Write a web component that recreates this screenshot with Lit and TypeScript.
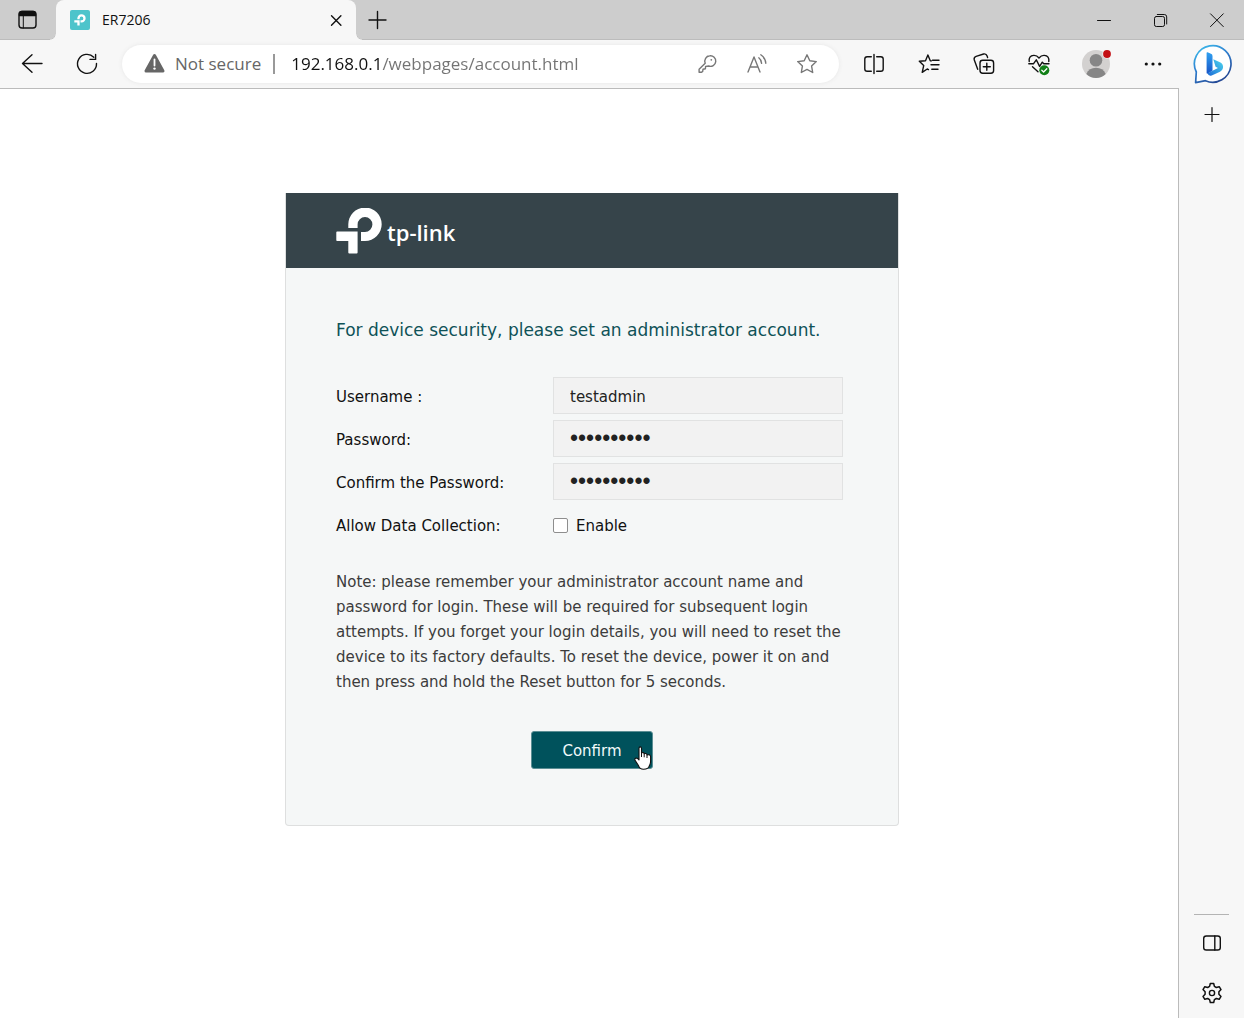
import { LitElement, html, css, svg } from "lit";
import { customElement, state } from "lit/decorators.js";

const tpMark = svg`
  <path d="M12.3 20 V16.7 A16.7 16.7 0 1 1 29 33 H25 V23.9 H29 A7.4 7.4 0 1 0 21.6 16.5 V20 Z"/>
  <path d="M0.8 23.6 H21.6 V44.4 Q21.6 45.4 20.6 45.4 H13.3 Q12.3 45.4 12.3 44.4 V33 H1 Q0.3 33 0.3 32 V24.2 Z"/>`;

const icon = (size: number, body: unknown, cls = "") => html`
  <svg class="icon ${cls}" width=${size} height=${size} viewBox="0 0 ${size} ${size}" aria-hidden="true">${body}</svg>`;

const glyphs = {
  tabs: svg`<rect x="3" y="3.5" width="17" height="16.5" rx="3"/><path d="M3.5 7.5 V6 Q3.5 3.5 6 3.5 H17 Q19.5 3.5 19.5 6 V7.5 Z" fill="currentColor"/><path d="M7.3 8 V20" stroke-width="1"/>`,
  close: svg`<path d="M7.5 7.8 L16.9 17.2 M16.9 7.8 L7.5 17.2"/>`,
  plus: svg`<path d="M12.5 3.5 V20.5 M4 12 H21"/>`,
  smallPlus: svg`<path d="M12 5.5 V19.5 M5 12.5 H19" stroke-width="1.2"/>`,
  minimise: svg`<path d="M5.5 12.5 H18.5"/>`,
  restore: svg`<rect x="5.5" y="8.5" width="10" height="10" rx="1.8"/><path d="M8.3 6.5 H15.3 Q17.7 6.5 17.7 8.9 V16"/>`,
  windowClose: svg`<path d="M5.5 5.8 L18.3 18.6 M18.3 5.8 L5.5 18.6"/>`,
  back: svg`<path d="M22 11.5 H2.5 M12 2.7 L2.5 11.5 L12 20.3"/>`,
  reload: svg`<path d="M18.8 5.2 A9.5 9.5 0 1 0 21.5 11.5 M20.6 2.4 V7.4 H15"/>`,
  warning: svg`<path d="M12.5 3.5 L21 19 H4 Z" fill="currentColor" stroke-width="3"/><path d="M12.5 7.5 V13.5" stroke="#fff" stroke-width="1.8"/><circle cx="12.5" cy="16.6" r="1.2" fill="#fff" stroke="none"/>`,
  key: svg`<path d="M14.7 3.8 A5.3 5.3 0 1 1 13.6 14 L10.6 14.4 L10.4 16.8 L8 17.2 L7.7 19.4 L6.6 20.3 H4.1 V17.3 L10.2 11.2 A5.4 5.4 0 0 1 14.7 3.8 Z"/><circle cx="16.3" cy="7.8" r="0.9" fill="currentColor" stroke="none"/>`,
  readAloud: svg`<path d="M3 20 L9 5 L15 20 M5 15 H13 M13.8 5.8 Q16.2 7.6 16.6 11.3 M15.8 2.8 Q20.4 6 20.8 11.3"/>`,
  star: svg`<path d="M12 2.8 L14.8 8.7 L21.3 9.6 L16.6 14.1 L17.7 20.5 L12 17.4 L6.3 20.5 L7.4 14.1 L2.7 9.6 L9.2 8.7 Z"/>`,
  split: svg`<path d="M12 2.5 V21.5 M9.3 4.7 H5.2 Q2.8 4.7 2.8 7 V17 Q2.8 19.3 5.2 19.3 H9.3 M14.7 4.7 H18.8 Q21.2 4.7 21.2 7 V17 Q21.2 19.3 18.8 19.3 H14.7"/>`,
  favourites: svg`<path d="M14.3 8.9 L13.3 8.7 L10.9 3 L8.5 8.7 L2.3 9.3 L6.7 13.6 L5.2 20.3 L10.2 17 L11.5 17.6 M15.5 8.3 H22 M14 12.7 H22 M14.8 17.2 H21"/>`,
  collections: svg`<rect x="8" y="8.3" width="13.6" height="13" rx="2.7"/><path d="M14.8 11.3 V18.3 M11.3 14.8 H18.3 M5.7 17.3 L2.3 8 Q1.5 5.3 4.1 4.4 L11.6 2 Q14.3 1.5 15.1 4 L15.6 5.5"/>`,
  heart: svg`<path d="M2.2 9.5 Q1.5 3.8 6.7 3.4 Q9.8 3.2 12 6 Q14.3 3.2 17.3 3.4 Q22.5 3.8 21.8 9.5 M1.8 11.8 H6.4 L9.3 7.8 L12.6 14.4 L15.3 10.2 L16.8 11.8 H22 M5.5 14.8 L11 19.8"/><circle cx="17.3" cy="18.2" r="5" fill="#128018" stroke="none"/><path d="M14.8 18.3 L16.6 20 L19.8 16.7" stroke="#fff" stroke-width="1.3"/>`,
  avatar: svg`<g stroke="none"><circle cx="16" cy="16" r="14" fill="#d3d1d0"/><circle cx="16" cy="12.2" r="6.3" fill="#868686"/><path d="M6.3 26 Q9 19.8 16 19.8 Q23 19.8 25.7 26 A14 14 0 0 1 6.3 26 Z" fill="#868686"/><circle cx="27" cy="6" r="4.6" fill="#f7f7f7"/><circle cx="27" cy="6" r="3.9" fill="#c30f14"/></g>`,
  more: svg`<g fill="currentColor" stroke="none"><circle cx="5.3" cy="12" r="1.6"/><circle cx="12" cy="12" r="1.6"/><circle cx="18.7" cy="12" r="1.6"/></g>`,
  panel: svg`<rect x="3.7" y="5" width="16.6" height="14" rx="2.6"/><path d="M14.8 5 V19"/>`,
  gear: svg`<path d="M10.3 2.5 H13.7 L14.4 5.4 L16.3 6.5 L19.2 5.7 L21 8.6 L18.9 10.8 V13.2 L21 15.4 L19.2 18.3 L16.3 17.5 L14.4 18.6 L13.7 21.5 H10.3 L9.6 18.6 L7.7 17.5 L4.8 18.3 L3 15.4 L5.1 13.2 V10.8 L3 8.6 L4.8 5.7 L7.7 6.5 L9.6 5.4 Z" stroke-width="1.5"/><circle cx="12" cy="12" r="2.6"/>`,
  bing: svg`
    <defs>
      <linearGradient id="ring" x1="0" y1="0" x2="0.6" y2="1"><stop offset="0" stop-color="#3ec3ee"/><stop offset="0.5" stop-color="#2f80d0"/><stop offset="1" stop-color="#254a96"/></linearGradient>
      <linearGradient id="stem" x1="0" y1="0" x2="0" y2="1"><stop offset="0" stop-color="#2f9ff0"/><stop offset="1" stop-color="#1857c8"/></linearGradient>
      <linearGradient id="bowl" x1="0" y1="1" x2="1" y2="0"><stop offset="0" stop-color="#1c6bd6"/><stop offset="1" stop-color="#4fd8ee"/></linearGradient>
    </defs>
    <g transform="translate(1 1.5)">
      <path d="M2.6 38.2 L3.3 27.5 A18.3 18.3 0 1 1 12.5 36.2 Z" fill="#fff" stroke="url(#ring)" stroke-width="1.7"/>
      <path d="M14.3 8.5 L17.7 9.8 Q18.8 10.2 18.8 11.5 V26 L14.3 28.5 Z" fill="url(#stem)" stroke="url(#stem)"/>
      <path d="M20.3 14.8 L27.5 18 Q30.5 19.6 30 23.5 Q29.4 26.3 27 27.3 L18.7 31 Q15.5 32 14.5 28.8 L25 23.6 L22.6 22.2 Z" fill="url(#bowl)" stroke="none"/>
    </g>`,
};

@customElement("app-root")
export class AppRoot extends LitElement {
  static styles = css`
    :host {
      display: flex;
      flex-direction: column;
      min-height: 100vh;
      background: #f7f7f7;
      color: #111;
      font-family: "Open Sans", "Noto Sans", sans-serif;
    }
    * { box-sizing: border-box; }
    button {
      border: 0;
      padding: 0;
      background: none;
      color: inherit;
      font: inherit;
      display: flex;
      align-items: center;
      justify-content: center;
      flex: none;
    }
    .icon {
      display: block;
      flex: none;
      fill: none;
      stroke: currentColor;
      stroke-width: 1.4;
      stroke-linecap: round;
      stroke-linejoin: round;
    }
    .thin { stroke-width: 1; }
    .titlebar {
      display: flex;
      height: 40px;
      background: #cdcdcd;
      box-shadow: inset 0 -1px #bcbcbc;
    }
    .tabmenu { width: 56px; height: 40px; }
    .tab {
      position: relative;
      display: flex;
      align-items: center;
      gap: 12px;
      width: 300px;
      padding: 0 8px 0 14px;
      background: #f7f7f7;
      border-radius: 8px 8px 0 0;
    }
    .tab::before, .tab::after {
      content: "";
      position: absolute;
      bottom: 0;
      width: 6px;
      height: 6px;
    }
    .tab::before {
      left: -6px;
      background: radial-gradient(circle at 0 0, transparent 5px, #bcbcbc 5px, #f7f7f7 6px);
    }
    .tab::after {
      right: -6px;
      background: radial-gradient(circle at 100% 0, transparent 5px, #bcbcbc 5px, #f7f7f7 6px);
    }
    .tabname { flex: 1; padding-bottom: 2px; font-size: 14px; }
    .favicon { display: block; border-radius: 2px; background: #4dc4cb; fill: #fff; }
    .newtab { width: 42px; }
    .winbuttons { display: flex; margin-left: auto; }
    .winbutton { width: 57px; height: 40px; }
    .winbutton:last-child { width: 55px; }
    .toolbar {
      display: flex;
      align-items: center;
      gap: 15px;
      height: 48px;
      padding: 0 6px 0 12px;
    }
    .tool { width: 40px; height: 40px; }
    .profile { width: 44px; height: 40px; }
    .bing { width: 50px; height: 40px; }
    .address {
      display: flex;
      align-items: center;
      flex: 1;
      min-width: 0;
      height: 38px;
      padding: 0 7px 0 20px;
      border-radius: 19px;
      background: #fff;
      box-shadow: 0 0 4px #e6e6e6;
      color: #666;
      font-size: 17px;
    }
    .notsecure { display: flex; align-items: center; gap: 9px; }
    .notsecure span { padding-bottom: 2px; }
    .divider { width: 2px; height: 20px; margin: 0 16px 0 12px; background: #999; }
    .url {
      flex: 1;
      min-width: 0;
      border: 0;
      padding: 0 0 2px;
      outline: 0;
      font: inherit;
      color: transparent;
      background: linear-gradient(to right, #111 90px, #737373 90px) text;
      -webkit-background-clip: text;
      background-clip: text;
    }
    .inline { width: 50px; height: 38px; color: #777; }
    .main { display: flex; flex: 1; }
    .page {
      flex: 1;
      min-width: 0;
      padding: 104px 0 40px 6px;
      background: #fff;
      border-top: 1px solid #bbb;
      border-right: 1px solid #bbb;
      font-family: "DejaVu Sans", sans-serif;
      font-size: 15px;
    }
    .sidebar {
      display: flex;
      flex-direction: column;
      align-items: center;
      width: 65px;
      padding: 6px 0 5px;
    }
    .side { width: 40px; height: 40px; }
    .sidebottom {
      display: flex;
      flex-direction: column;
      align-items: center;
      gap: 10px;
      width: 35px;
      margin-top: auto;
      padding-top: 8px;
      border-top: 1px solid #b4b4b4;
    }
    .card {
      max-width: 614px;
      margin: 0 auto;
      border: 1px solid #dedfdf;
      border-top: 0;
      border-radius: 0 0 4px 4px;
      background: #f5f7f7;
    }
    .brand {
      display: flex;
      align-items: center;
      gap: 5px;
      height: 75px;
      padding: 0 50px;
      background: #36444a;
      color: #fff;
    }
    .mark { display: block; fill: #fff; }
    .brandname { padding-top: 2px; font: 600 22px/30px "Open Sans", sans-serif; }
    .form { padding: 50px 50px 56px; }
    .title {
      margin: 0 0 35px;
      font-size: 17px;
      font-weight: 400;
      line-height: 24px;
      color: #0f5257;
    }
    .fields { display: grid; grid-template-columns: 217px 290px; row-gap: 6px; align-items: center; }
    .name { padding-top: 2px; }
    .box {
      width: 100%;
      height: 37px;
      padding: 2px 16px 0;
      border: 1px solid #e1e2e2;
      border-radius: 0;
      outline: 0;
      background: #f2f2f2;
      color: #222;
      font: 15px "DejaVu Sans", sans-serif;
    }
    .secret { padding-top: 0; font: 23px "Liberation Sans", sans-serif; }
    .check { display: flex; align-items: center; gap: 8px; height: 37px; padding-top: 2px; }
    .tick {
      appearance: none;
      width: 15px;
      height: 15px;
      margin: 0;
      border: 1px solid #8e8e8e;
      border-radius: 2px;
      background: #fff;
    }
    .tick:checked { background: #00525c; }
    .note { margin: 27px 0 36px; line-height: 25px; color: #3c3c3c; }
    .action { position: relative; width: 122px; margin: 0 auto; }
    .confirm {
      width: 100%;
      height: 38px;
      padding-top: 2px;
      border: 1px solid #5b8e94;
      border-radius: 3px;
      background: #00525c;
      color: #f2fafa;
      font-size: 15px;
    }
    .pointer { position: absolute; left: 103px; top: 15px; }
  `;

  @state() private collecting = false;

  private titlebar() {
    return html`
      <header class="titlebar">
        <button class="tabmenu" aria-label="Tab actions">${icon(24, glyphs.tabs)}</button>
        <div class="tab">
          <svg class="favicon" width="20" height="20" viewBox="-17 -17 80 80" aria-hidden="true">${tpMark}</svg>
          <span class="tabname">ER7206</span>
          <button aria-label="Close tab">${icon(24, glyphs.close)}</button>
        </div>
        <button class="newtab" aria-label="New tab">${icon(24, glyphs.plus)}</button>
        <div class="winbuttons">
          <button class="winbutton" aria-label="Minimise">${icon(24, glyphs.minimise, "thin")}</button>
          <button class="winbutton" aria-label="Restore">${icon(24, glyphs.restore, "thin")}</button>
          <button class="winbutton" aria-label="Close window">${icon(24, glyphs.windowClose, "thin")}</button>
        </div>
      </header>`;
  }

  private toolbar() {
    return html`
      <nav class="toolbar">
        <button class="tool" aria-label="Back">${icon(24, glyphs.back)}</button>
        <button class="tool" aria-label="Reload">${icon(24, glyphs.reload)}</button>
        <div class="address">
          <button class="notsecure">${icon(24, glyphs.warning)}<span>Not secure</span></button>
          <span class="divider"></span>
          <input class="url" aria-label="Address" spellcheck="false" value="192.168.0.1/webpages/account.html">
          <button class="inline" aria-label="Saved passwords">${icon(24, glyphs.key)}</button>
          <button class="inline" aria-label="Read aloud">${icon(24, glyphs.readAloud)}</button>
          <button class="inline" aria-label="Add to favourites">${icon(24, glyphs.star)}</button>
        </div>
        <button class="tool" aria-label="Split screen">${icon(24, glyphs.split)}</button>
        <button class="tool" aria-label="Favourites">${icon(24, glyphs.favourites)}</button>
        <button class="tool" aria-label="Collections">${icon(24, glyphs.collections)}</button>
        <button class="tool" aria-label="Browser essentials">${icon(24, glyphs.heart)}</button>
        <button class="profile" aria-label="Profile">${icon(32, glyphs.avatar)}</button>
        <button class="tool" aria-label="Settings and more">${icon(24, glyphs.more)}</button>
        <button class="bing" aria-label="Bing chat">${icon(42, glyphs.bing)}</button>
      </nav>`;
  }

  private account() {
    return html`
      <section class="card">
        <div class="brand">
          <svg class="mark" width="46" height="46" viewBox="0 0 46 46" aria-hidden="true">${tpMark}</svg>
          <span class="brandname">tp-link</span>
        </div>
        <form class="form" @submit=${(e: Event) => e.preventDefault()}>
          <h1 class="title">For device security, please set an administrator account.</h1>
          <div class="fields">
            <label class="name" for="user">Username :</label>
            <input class="box" id="user" type="text" value="testadmin">
            <label class="name" for="pass">Password:</label>
            <input class="box secret" id="pass" type="password" value="0123456789">
            <label class="name" for="again">Confirm the Password:</label>
            <input class="box secret" id="again" type="password" value="0123456789">
            <span class="name">Allow Data Collection:</span>
            <label class="check">
              <input class="tick" type="checkbox" .checked=${this.collecting}
                @change=${(e: Event) => (this.collecting = (e.target as HTMLInputElement).checked)}>
              Enable
            </label>
          </div>
          <p class="note">Note: please remember your administrator account name and password for login. These will be required for subsequent login attempts. If you forget your login details, you will need to reset the device to its factory defaults. To reset the device, power it on and then press and hold the Reset button for 5 seconds.</p>
          <div class="action">
            <button class="confirm" type="submit">Confirm</button>
            <svg class="pointer" width="18" height="25" viewBox="0 0 18 25" aria-hidden="true">
              <path d="M5 13.5 V2.3 Q5 0.9 6.2 0.9 Q7.5 0.9 7.5 2.3 V7 Q9.8 5.8 10.2 7.8 Q12.6 6.8 13 8.9 Q16.6 8 16.6 11 V15 Q16.6 18 15.2 20 Q14.5 23.2 9.5 23.2 Q5.6 23.2 4.6 19.8 L0.9 14 Q0.6 12.2 2.2 12 Q3.6 12 5 13.9 Z" fill="#fff" stroke="#111" stroke-width="1.1" stroke-linejoin="round"/>
              <path d="M7.5 7 V11 M10.2 8 V11.3 M13 9 V12" fill="none" stroke="#111" stroke-width="1"/>
            </svg>
          </div>
        </form>
      </section>`;
  }

  render() {
    return html`
      ${this.titlebar()}
      ${this.toolbar()}
      <div class="main">
        <main class="page">${this.account()}</main>
        <aside class="sidebar">
          <button class="side" aria-label="Customise sidebar">${icon(24, glyphs.smallPlus)}</button>
          <div class="sidebottom">
            <button class="side" aria-label="Hide sidebar">${icon(24, glyphs.panel)}</button>
            <button class="side" aria-label="Settings">${icon(24, glyphs.gear)}</button>
          </div>
        </aside>
      </div>`;
  }
}
